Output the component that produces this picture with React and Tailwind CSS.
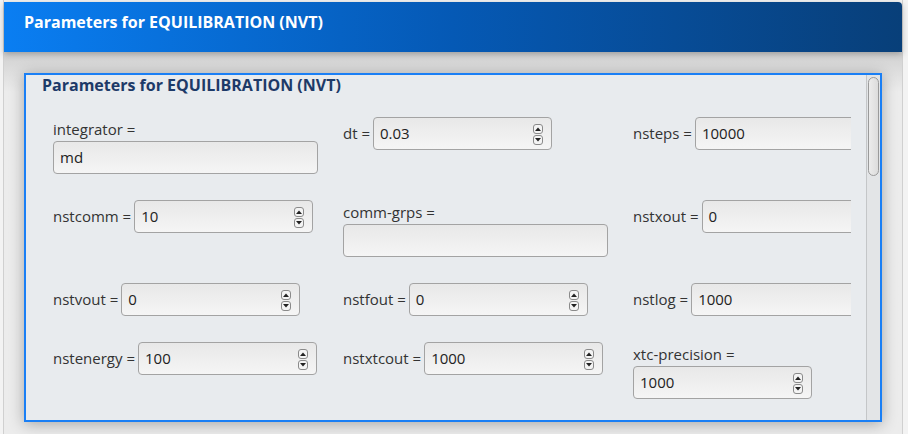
import React from 'react';

const fields = [
  [
    { name: 'integrator', value: 'md', type: 'text', wrap: true },
    { name: 'dt', value: '0.03', type: 'spin' },
    { name: 'nsteps', value: '10000', type: 'spin' },
  ],
  [
    { name: 'nstcomm', value: '10', type: 'spin' },
    { name: 'comm-grps', value: '', type: 'text', wrap: true },
    { name: 'nstxout', value: '0', type: 'spin' },
  ],
  [
    { name: 'nstvout', value: '0', type: 'spin' },
    { name: 'nstfout', value: '0', type: 'spin' },
    { name: 'nstlog', value: '1000', type: 'spin' },
  ],
  [
    { name: 'nstenergy', value: '100', type: 'spin' },
    { name: 'nstxtcout', value: '1000', type: 'spin' },
    { name: 'xtc-precision', value: '1000', type: 'spin', wrap: true },
  ],
];

const SpinButtons = () => (
  <div className="absolute right-[8px] top-[6px] flex flex-col gap-[1px]">
    <div className="w-[10px] h-[10px] rounded-[3px] border border-[#8a8a8a] bg-[#f4f4f4] flex items-center justify-center">
      <svg width="6" height="4" viewBox="0 0 6 4"><path d="M0 4 L3 0.5 L6 4 Z" fill="#222" /></svg>
    </div>
    <div className="w-[10px] h-[10px] rounded-[3px] border border-[#8a8a8a] bg-[#f4f4f4] flex items-center justify-center">
      <svg width="6" height="4" viewBox="0 0 6 4"><path d="M0 0 L3 3.5 L6 0 Z" fill="#222" /></svg>
    </div>
  </div>
);

const Input = ({ value, type }) => (
  <div
    className={`relative shrink-0 h-[33px] rounded-[4px] border border-[#a3a3a3] bg-gradient-to-b from-[#e8e8e8] to-[#f5f5f5] flex items-center px-[6px] text-[15px] text-[#222] ${
      type === 'spin' ? 'w-[179px]' : 'w-[265px]'
    }`}
  >
    {value}
    {type === 'spin' && <SpinButtons />}
  </div>
);

const Field = ({ name, value, type, wrap }) => {
  if (wrap) {
    return (
      <div className="flex flex-col">
        <div className="h-[24px] leading-[24px] text-[15px] text-[#333]">{name} =</div>
        <Input value={value} type={type} />
      </div>
    );
  }
  return (
    <div className="flex items-center gap-[3px]">
      <span className="text-[15px] text-[#333] whitespace-nowrap">{name} =</span>
      <Input value={value} type={type} />
    </div>
  );
};

export default function App() {
  return (
    <div className="w-[908px] h-[434px] overflow-hidden bg-[#f3f3f3] font-['Open_Sans',sans-serif]">
      <div className="ml-[3px] w-[900px] h-[434px] border-l border-r border-[#d0d0d0] flex flex-col">
        {/* header */}
        <div className="mt-[2px] h-[50px] rounded-tr-[4px] bg-gradient-to-r from-[#0a7ef2] via-[#0559b5] to-[#083f79] pl-[20px] pt-[9px] shadow-[0_2px_6px_rgba(0,0,0,0.25)] relative z-10">
          <h1 className="text-[16px] leading-[22px] font-bold text-white">Parameters for EQUILIBRATION (NVT)</h1>
        </div>

        {/* body */}
        <div className="flex-1 bg-gradient-to-b from-[#d0d0d0] to-[#ececec] to-[40px] pt-[21px] pl-[20px]">
          <div className="w-[858px] h-[349px] border-2 border-[#1a7ff5] bg-[#e8ebee] shadow-[0_2px_14px_rgba(0,0,0,0.3)] flex">
            <div className="flex-1 min-w-0">
              <h2 className="pl-[16px] text-[16px] leading-[20px] font-bold text-[#1d3a68]">
                Parameters for EQUILIBRATION (NVT)
              </h2>
              <div className="mt-[22px] ml-[27px] w-[798px] overflow-hidden flex flex-col gap-y-[26px]">
                {fields.map((row, i) => (
                  <div key={i} className="grid grid-cols-[290px_290px_290px] items-start">
                    {row.map((f) => (
                      <Field key={f.name} {...f} />
                    ))}
                  </div>
                ))}
              </div>
            </div>
            {/* scrollbar */}
            <div className="w-[14px] border-l border-[#c4c6c8] bg-[#e3e5e7] pt-[2px] pl-[1px]">
              <div className="w-[11px] h-[99px] rounded-full border border-[#9a9a9a] bg-gradient-to-r from-[#ececec] to-[#dcdcdc]" />
            </div>
          </div>
        </div>
      </div>
    </div>
  );
}
